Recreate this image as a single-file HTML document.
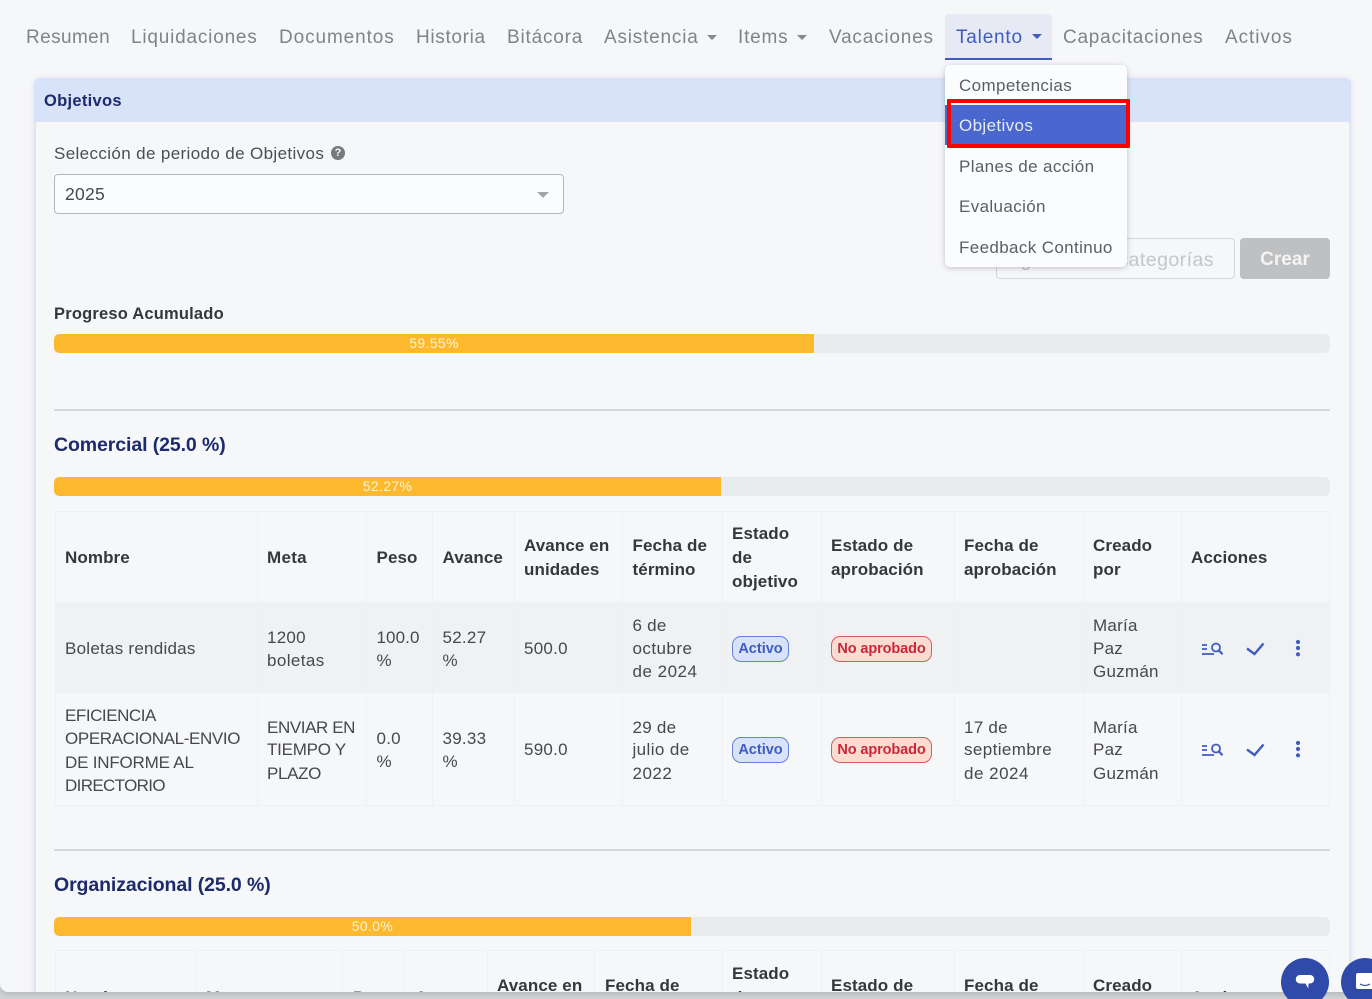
<!DOCTYPE html>
<html lang="es"><head><meta charset="utf-8"><title>Objetivos</title>
<style>
html,body{margin:0;padding:0;width:1372px;height:999px;overflow:hidden;background:#cfd0d2}
body{position:relative;font-family:"Liberation Sans",Arial,sans-serif}
#page{position:absolute;left:0;top:0;width:1372px;height:992px;background:#f6f7f9;overflow:hidden;border-radius:0 0 0 8px;box-shadow:0 2px 5px rgba(0,0,0,.12)}
.b{position:absolute}
.t{position:absolute;white-space:nowrap;line-height:24px;margin-top:-11px;font-size:17px;letter-spacing:.25px;color:#46484c}
.h{font-weight:bold;color:#35373b;letter-spacing:.1px}
.n{font-size:19px;letter-spacing:.8px;color:#808387}
.v{position:absolute;width:1px;background:#eff0f2}
.bar{position:absolute;left:54px;width:1276px;height:19px;background:#e9ecef;border-radius:5px;overflow:hidden}
.fill{height:19px;background:#fdb92e;border-radius:5px 0 0 5px;color:#fff2d6;font-size:14px;line-height:18px;text-align:center;letter-spacing:.35px}
.hd{font-size:19.5px;font-weight:bold;color:#1d2a6b;letter-spacing:-.1px}
.caret{position:absolute;width:0;height:0;border-left:5px solid transparent;border-right:5px solid transparent;border-top:5px solid #85888c}
.ba{position:absolute;box-sizing:border-box;height:26px;border-radius:9px;border:1.5px solid #6583d6;background:#d8e2f8;color:#3f5cc0;font-weight:bold;font-size:14.5px;line-height:24px;text-align:center;width:57px;left:732px}
.bn{border-color:#d0605f;background:#fcdcd0;color:#c9283a;width:101px;left:831px;letter-spacing:-.1px}
.m{font-size:17px;color:#5c5e62;letter-spacing:.37px}
.u{letter-spacing:-.3px}
svg{position:absolute}
</style></head><body>
<div id="page">
<!-- card -->
<div class="b" style="left:34px;top:78px;width:1317px;height:940px;box-sizing:border-box;border:1px solid #dfe6f2;border-width:0 2px;border-radius:6px;background:#f6f7f9;box-shadow:0 0 6px rgba(120,140,180,.2)"></div>
<div class="b" style="left:34px;top:78px;width:1317px;height:44px;background:#d8e2f8;border-radius:6px 6px 0 0"></div>
<div class="t" style="left:44px;top:100px;font-size:16.5px;font-weight:bold;color:#1d2a6b;letter-spacing:.3px">Objetivos</div>

<!-- nav -->
<div class="b" style="left:945px;top:14px;width:107px;height:44px;background:#e7eaf5;border-bottom:2px solid #3f5cc0;border-radius:4px 4px 0 0"></div>
<div class="t n" style="left:26px;top:37px;letter-spacing:.4px">Resumen</div>
<div class="t n" style="left:131px;top:37px">Liquidaciones</div>
<div class="t n" style="left:279px;top:37px;letter-spacing:.9px">Documentos</div>
<div class="t n" style="left:416px;top:37px;letter-spacing:.67px">Historia</div>
<div class="t n" style="left:507px;top:37px">Bitácora</div>
<div class="t n" style="left:604px;top:37px">Asistencia</div>
<div class="caret" style="left:707px;top:35px"></div>
<div class="t n" style="left:738px;top:37px">Items</div>
<div class="caret" style="left:797px;top:35px"></div>
<div class="t n" style="left:829px;top:37px">Vacaciones</div>
<div class="t n" style="left:956px;top:37px;color:#3f5cc0">Talento</div>
<div class="caret" style="left:1032px;top:34px;border-top-color:#3f5cc0"></div>
<div class="t n" style="left:1063px;top:37px;letter-spacing:.76px">Capacitaciones</div>
<div class="t n" style="left:1225px;top:37px;letter-spacing:.93px">Activos</div>

<!-- selector -->
<div class="t" style="left:54px;top:153px;color:#4c4e52;letter-spacing:.37px">Selección de periodo de Objetivos</div>
<div class="b" style="left:331px;top:146px;width:14px;height:14px;border-radius:50%;background:#77797d;color:#f6f7f9;font-size:11px;font-weight:bold;line-height:14px;text-align:center">?</div>
<div class="b" style="left:54px;top:174px;width:508px;height:38px;background:#fbfcfe;border:1px solid #b4b6b9;border-radius:4px"></div>
<div class="t" style="left:65px;top:193px;font-size:17.500px;color:#47494d">2025</div>
<div class="caret" style="left:537px;top:192px;border-left-width:6.500px;border-right-width:6.500px;border-top-width:6px;border-top-color:#a3a5a8"></div>

<!-- buttons -->
<div class="b" style="left:996px;top:238px;width:237px;height:39px;border:1px solid #d5d6d8;border-radius:4px"></div>
<div class="t" style="left:1007px;top:259px;font-size:19.500px;letter-spacing:.45px;color:#c4c6c9">Ag</div>
<div class="t" style="right:158px;top:259px;font-size:19.500px;letter-spacing:.45px;color:#c4c6c9">categorías</div>
<div class="b" style="left:1240px;top:238px;width:90px;height:41px;background:#bfc0c2;border-radius:4px;color:#f4f4f5;font-size:19px;font-weight:bold;line-height:44px;text-align:center">Crear</div>

<!-- accumulated -->
<div class="t h" style="left:54px;top:313px;font-size:16.500px;letter-spacing:.2px">Progreso Acumulado</div>
<div class="bar" style="top:334px"><div class="fill" style="width:760px">59.55%</div></div>
<div class="b" style="left:54px;top:409px;width:1276px;height:2px;background:#d5d6d9"></div>

<!-- Comercial -->
<div class="t hd" style="left:54px;top:444px">Comercial (25.0 %)</div>
<div class="bar" style="top:477px"><div class="fill" style="width:667px">52.27%</div></div>

<div class="b" style="left:55px;top:602px;width:1274px;height:91px;background:#f0f1f3"></div>
<div class="b" style="left:55px;top:511px;width:1274px;height:1px;background:#eff0f2"></div>
<div class="b" style="left:55px;top:805px;width:1274px;height:1px;background:#eff0f2"></div>
<div class="v" style="left:55px;top:511px;height:295px"></div>
<div class="v" style="left:257px;top:511px;height:295px"></div>
<div class="v" style="left:366px;top:511px;height:295px"></div>
<div class="v" style="left:432px;top:511px;height:295px"></div>
<div class="v" style="left:514px;top:511px;height:295px"></div>
<div class="v" style="left:622px;top:511px;height:295px"></div>
<div class="v" style="left:722px;top:511px;height:295px"></div>
<div class="v" style="left:821px;top:511px;height:295px"></div>
<div class="v" style="left:954px;top:511px;height:295px"></div>
<div class="v" style="left:1083px;top:511px;height:295px"></div>
<div class="v" style="left:1181px;top:511px;height:295px"></div>
<div class="v" style="left:1329px;top:511px;height:295px"></div>

<div class="t h" style="left:65px;top:557px">Nombre</div>
<div class="t h" style="left:267px;top:557px;letter-spacing:.3px">Meta</div>
<div class="t h" style="left:376.500px;top:557px">Peso</div>
<div class="t h" style="left:442.500px;top:557px">Avance</div>
<div class="t h" style="left:524px;top:545px">Avance en</div>
<div class="t h" style="left:524px;top:569px">unidades</div>
<div class="t h" style="left:632.500px;top:545px">Fecha de</div>
<div class="t h" style="left:632.500px;top:569px">término</div>
<div class="t h" style="left:732px;top:533px">Estado</div>
<div class="t h" style="left:732px;top:557px">de</div>
<div class="t h" style="left:732px;top:581px">objetivo</div>
<div class="t h" style="left:831px;top:545px">Estado de</div>
<div class="t h" style="left:831px;top:569px">aprobación</div>
<div class="t h" style="left:964px;top:545px">Fecha de</div>
<div class="t h" style="left:964px;top:569px">aprobación</div>
<div class="t h" style="left:1093px;top:545px">Creado</div>
<div class="t h" style="left:1093px;top:569px">por</div>
<div class="t h" style="left:1191px;top:557px">Acciones</div>

<!-- row 1 -->
<div class="t" style="left:65px;top:648px">Boletas rendidas</div>
<div class="t" style="left:267px;top:637px">1200</div>
<div class="t" style="left:267px;top:660px;letter-spacing:.4px">boletas</div>
<div class="t" style="left:376.500px;top:637px;letter-spacing:.1px">100.0</div>
<div class="t" style="left:376.500px;top:660px">%</div>
<div class="t" style="left:442.500px;top:637px">52.27</div>
<div class="t" style="left:442.500px;top:660px">%</div>
<div class="t" style="left:524px;top:648px">500.0</div>
<div class="t" style="left:632.500px;top:625px">6 de</div>
<div class="t" style="left:632.500px;top:648px;letter-spacing:.45px">octubre</div>
<div class="t" style="left:632.500px;top:671px;letter-spacing:.5px">de 2024</div>
<div class="ba" style="top:635.500px">Activo</div>
<div class="ba bn" style="top:635.500px">No aprobado</div>
<div class="t" style="left:1093px;top:625px">María</div>
<div class="t" style="left:1093px;top:648px">Paz</div>
<div class="t" style="left:1093px;top:671px">Guzmán</div>

<!-- row 2 -->
<div class="t u" style="left:65px;top:715px;letter-spacing:-.45px">EFICIENCIA</div>
<div class="t u" style="left:65px;top:738px;letter-spacing:-.37px">OPERACIONAL-ENVIO</div>
<div class="t u" style="left:65px;top:762px;letter-spacing:-.2px">DE INFORME AL</div>
<div class="t u" style="left:65px;top:785px;letter-spacing:-.65px">DIRECTORIO</div>
<div class="t u" style="left:267px;top:727px;letter-spacing:-.4px">ENVIAR EN</div>
<div class="t u" style="left:267px;top:749px;letter-spacing:-.25px">TIEMPO Y</div>
<div class="t u" style="left:267px;top:773px;letter-spacing:-.35px">PLAZO</div>
<div class="t" style="left:376.500px;top:738px">0.0</div>
<div class="t" style="left:376.500px;top:761px">%</div>
<div class="t" style="left:442.500px;top:738px">39.33</div>
<div class="t" style="left:442.500px;top:761px">%</div>
<div class="t" style="left:524px;top:749px">590.0</div>
<div class="t" style="left:632.500px;top:727px">29 de</div>
<div class="t" style="left:632.500px;top:749px;letter-spacing:.4px">julio de</div>
<div class="t" style="left:632.500px;top:773px;letter-spacing:.5px">2022</div>
<div class="ba" style="top:736.500px">Activo</div>
<div class="ba bn" style="top:736.500px">No aprobado</div>
<div class="t" style="left:964px;top:727px">17 de</div>
<div class="t" style="left:964px;top:749px;letter-spacing:.4px">septiembre</div>
<div class="t" style="left:964px;top:773px;letter-spacing:.5px">de 2024</div>
<div class="t" style="left:1093px;top:727px">María</div>
<div class="t" style="left:1093px;top:749px">Paz</div>
<div class="t" style="left:1093px;top:773px">Guzmán</div>

<!-- action icons row 1 -->
<svg style="left:1201px;top:640px" width="23" height="18" viewBox="0 0 23 18" fill="none" stroke="#3f5cc0" stroke-width="1.800"><path d="M1 5h5M1 9h5M1 14h12"/><circle cx="15" cy="7.500" r="4"/><path d="M18 10.500l3.500 3.700" stroke-width="2.200"/></svg>
<svg style="left:1245px;top:640px" width="20" height="18" viewBox="0 0 20 18" fill="none" stroke="#3f5cc0" stroke-width="2.400"><path d="M2 8.500l7.500 5.500L18.500 3.500"/></svg>
<svg style="left:1290px;top:639px" width="16" height="18" viewBox="0 0 16 18" fill="#3f5cc0"><circle cx="8" cy="3" r="2.100"/><circle cx="8" cy="9" r="2.100"/><circle cx="8" cy="15.300" r="2.100"/></svg>
<!-- action icons row 2 -->
<svg style="left:1201px;top:741px" width="23" height="18" viewBox="0 0 23 18" fill="none" stroke="#3f5cc0" stroke-width="1.800"><path d="M1 5h5M1 9h5M1 14h12"/><circle cx="15" cy="7.500" r="4"/><path d="M18 10.500l3.500 3.700" stroke-width="2.200"/></svg>
<svg style="left:1245px;top:741px" width="20" height="18" viewBox="0 0 20 18" fill="none" stroke="#3f5cc0" stroke-width="2.400"><path d="M2 8.500l7.500 5.500L18.500 3.500"/></svg>
<svg style="left:1290px;top:740px" width="16" height="18" viewBox="0 0 16 18" fill="#3f5cc0"><circle cx="8" cy="3" r="2.100"/><circle cx="8" cy="9" r="2.100"/><circle cx="8" cy="15.300" r="2.100"/></svg>

<!-- Organizacional -->
<div class="b" style="left:54px;top:849px;width:1276px;height:2px;background:#d5d6d9"></div>
<div class="t hd" style="left:54px;top:884px">Organizacional (25.0 %)</div>
<div class="bar" style="top:917px"><div class="fill" style="width:637px">50.0%</div></div>

<div class="b" style="left:55px;top:950px;width:1274px;height:1px;background:#eff0f2"></div>
<div class="v" style="left:55px;top:950px;height:50px"></div>
<div class="v" style="left:196px;top:950px;height:50px"></div>
<div class="v" style="left:342px;top:950px;height:50px"></div>
<div class="v" style="left:404px;top:950px;height:50px"></div>
<div class="v" style="left:487px;top:950px;height:50px"></div>
<div class="v" style="left:594px;top:950px;height:50px"></div>
<div class="v" style="left:722px;top:950px;height:50px"></div>
<div class="v" style="left:821px;top:950px;height:50px"></div>
<div class="v" style="left:954px;top:950px;height:50px"></div>
<div class="v" style="left:1083px;top:950px;height:50px"></div>
<div class="v" style="left:1181px;top:950px;height:50px"></div>
<div class="v" style="left:1329px;top:950px;height:50px"></div>
<div class="t h" style="left:65px;top:997px">Nombre</div>
<div class="t h" style="left:206px;top:997px">Meta</div>
<div class="t h" style="left:353px;top:997px">Peso</div>
<div class="t h" style="left:415px;top:997px">Avance</div>
<div class="t h" style="left:497px;top:985px">Avance en</div>
<div class="t h" style="left:605px;top:985px">Fecha de</div>
<div class="t h" style="left:732px;top:973px">Estado</div>
<div class="t h" style="left:732px;top:997px">de</div>
<div class="t h" style="left:831px;top:985px">Estado de</div>
<div class="t h" style="left:964px;top:985px">Fecha de</div>
<div class="t h" style="left:1093px;top:985px">Creado</div>
<div class="t h" style="left:1191px;top:997px">Acciones</div>

<!-- dropdown -->
<div class="b" style="left:945px;top:65px;width:182px;height:202px;background:#fbfcfe;border-radius:5px;box-shadow:0 1px 6px rgba(0,0,0,.22)"></div>
<div class="t m" style="left:959px;top:85px">Competencias</div>
<div class="b" style="left:945px;top:105px;width:182px;height:40px;background:#4a66cf"></div>
<div class="t m" style="left:959px;top:125px;color:#e6ebfa">Objetivos</div>
<div class="t m" style="left:959px;top:166px">Planes de acción</div>
<div class="t m" style="left:959px;top:206px">Evaluación</div>
<div class="t m" style="left:959px;top:247px">Feedback Continuo</div>
<div class="b" style="left:947px;top:99px;width:175px;height:41px;border:4px solid #f00;border-radius:1px"></div>
</div>

<!-- floating buttons -->
<div class="b" style="left:1281px;top:958px;width:48px;height:48px;border-radius:50%;background:#2f4aa8"></div>
<svg style="left:1295px;top:974px" width="20" height="18" viewBox="0 0 20 18"><path d="M5 1h10a4 4 0 0 1 0 8.500h-1.500l-.2 5-2.800-5H5a4 4 0 0 1 0-8.500z" fill="#fff"/></svg>
<div class="b" style="left:1341px;top:958px;width:48px;height:48px;border-radius:50%;background:#2f4aa8"></div>
<svg style="left:1355px;top:972px" width="17" height="20" viewBox="0 0 17 20"><rect x="1" y="1" width="18" height="16" rx="2" fill="#fff"/><path d="M5 12q5 3 10 0" fill="none" stroke="#2f4aa8" stroke-width="1.200"/></svg>
</body></html>
